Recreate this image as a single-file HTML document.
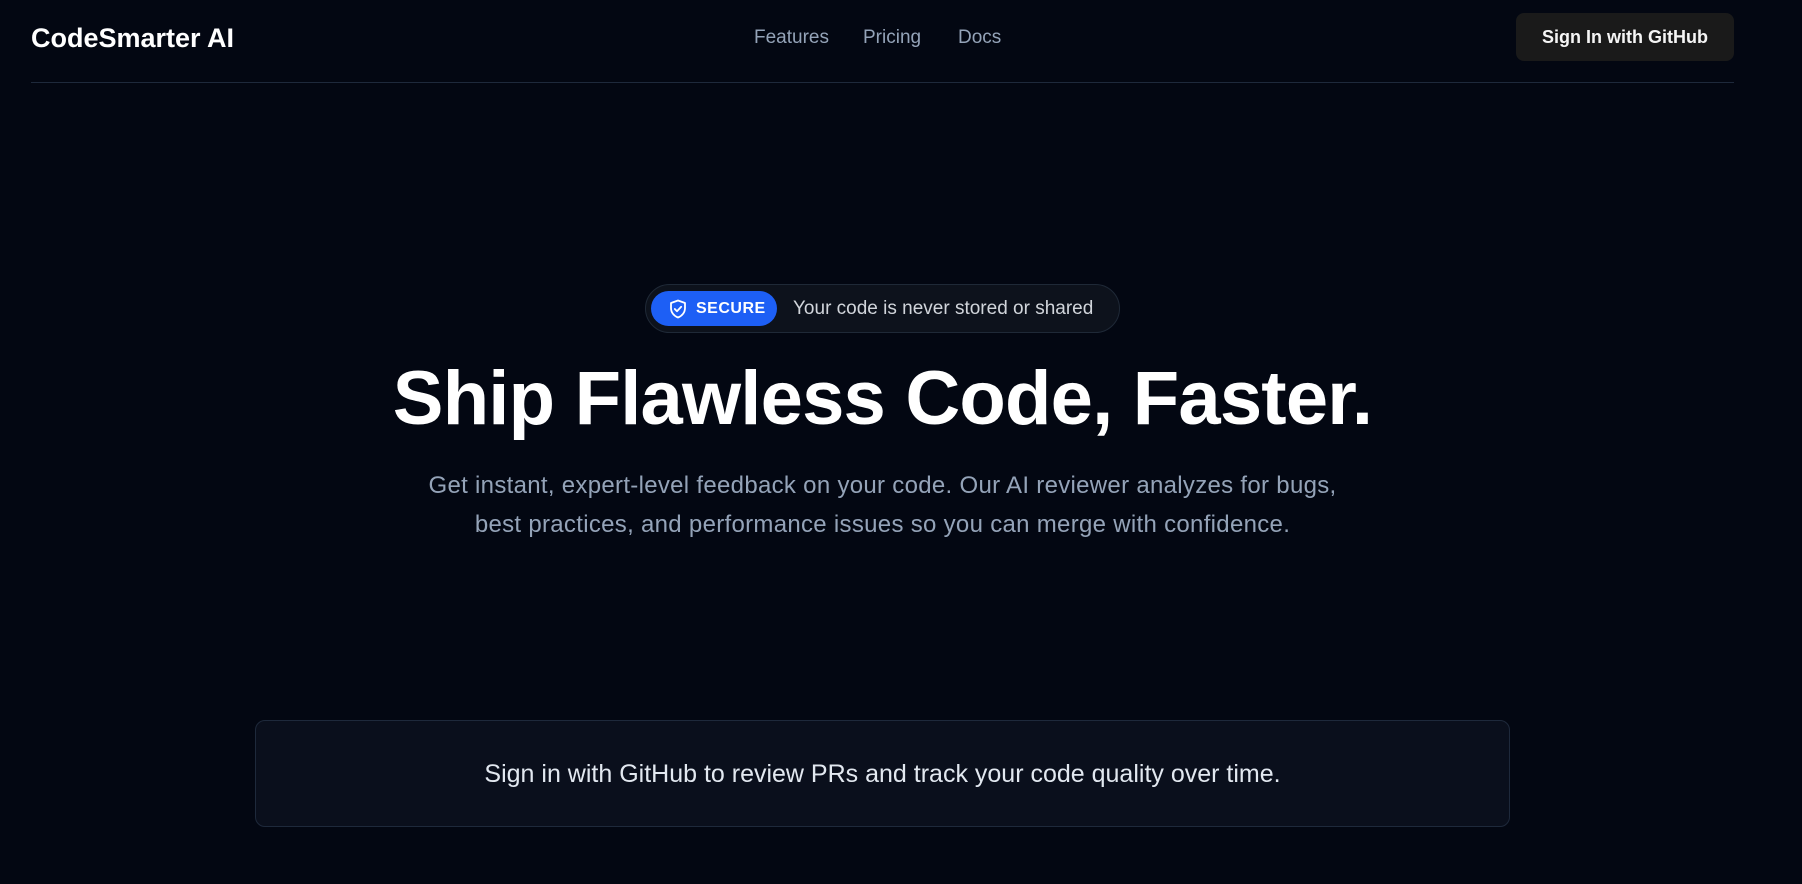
<!DOCTYPE html>
<html><head><meta charset="utf-8"><style>
*{margin:0;padding:0;box-sizing:border-box}
html,body{width:1802px;height:884px;overflow:hidden;background:#030712;font-family:"Liberation Sans",sans-serif;color:#fff}
.wrap{position:relative;width:1765px;height:884px}
.logo{position:absolute;left:31px;top:21px;font-size:27px;font-weight:bold;letter-spacing:0px;line-height:34px}
.nav{position:absolute;top:26px;font-size:19px;color:#94a3b8;line-height:24px}
.btn{position:absolute;left:1516px;top:13px;width:218px;height:48px;background:#1a1a1a;border-radius:8px;font-size:18px;font-weight:bold;text-align:center;line-height:48px;color:#f5f5f5}
.line{position:absolute;left:31px;top:82px;width:1703px;height:1px;background:#1e293b}
.badge{position:absolute;left:645px;top:284px;width:475px;height:49px;border:1px solid #1f2937;border-radius:25px;background:#0d121c}
.pill{position:absolute;left:5px;top:6px;width:126px;height:35px;background:#1d5ff5;border-radius:18px;color:#fff;font-weight:bold;font-size:16px;line-height:35px;padding-left:45px;letter-spacing:0.5px}
.pill svg{position:absolute;left:18px;top:8px}
.btxt{position:absolute;left:147px;top:0;line-height:47px;font-size:19px;color:#d1d5db}
h1{position:absolute;left:0;width:1765px;top:349px;text-align:center;font-size:76px;letter-spacing:-0.8px;line-height:100px;font-weight:bold}
.sub{position:absolute;left:0;width:1765px;top:466px;text-align:center;font-size:24px;letter-spacing:0.3px;line-height:39px;color:#94a3b8}
.box{position:absolute;left:255px;top:720px;width:1255px;height:107px;border:1px solid #1e293b;border-radius:10px;background:#0a0f1c;text-align:center;line-height:107px;font-size:25px;color:#e2e8f0}
</style></head><body><div class="wrap">
<div class="logo">CodeSmarter AI</div>
<div class="nav" style="left:754px">Features</div>
<div class="nav" style="left:863px">Pricing</div>
<div class="nav" style="left:958px">Docs</div>
<div class="btn">Sign In with GitHub</div>
<div class="line"></div>
<div class="badge"><div class="pill"><svg width="18" height="20" viewBox="0 0 18 20" fill="none" stroke="#fff" stroke-width="1.8" stroke-linejoin="round" stroke-linecap="round"><path d="M9 1.5L2 4v5c0 4.5 3 8 7 9.5 4-1.5 7-5 7-9.5V4z"/><path d="M5.8 10l2.2 2.2 4.2-4.4"/></svg>SECURE</div><div class="btxt">Your code is never stored or shared</div></div>
<h1>Ship Flawless Code, Faster.</h1>
<div class="sub">Get instant, expert-level feedback on your code. Our AI reviewer analyzes for bugs,<br>best practices, and performance issues so you can merge with confidence.</div>
<div class="box">Sign in with GitHub to review PRs and track your code quality over time.</div>
</div></body></html>
